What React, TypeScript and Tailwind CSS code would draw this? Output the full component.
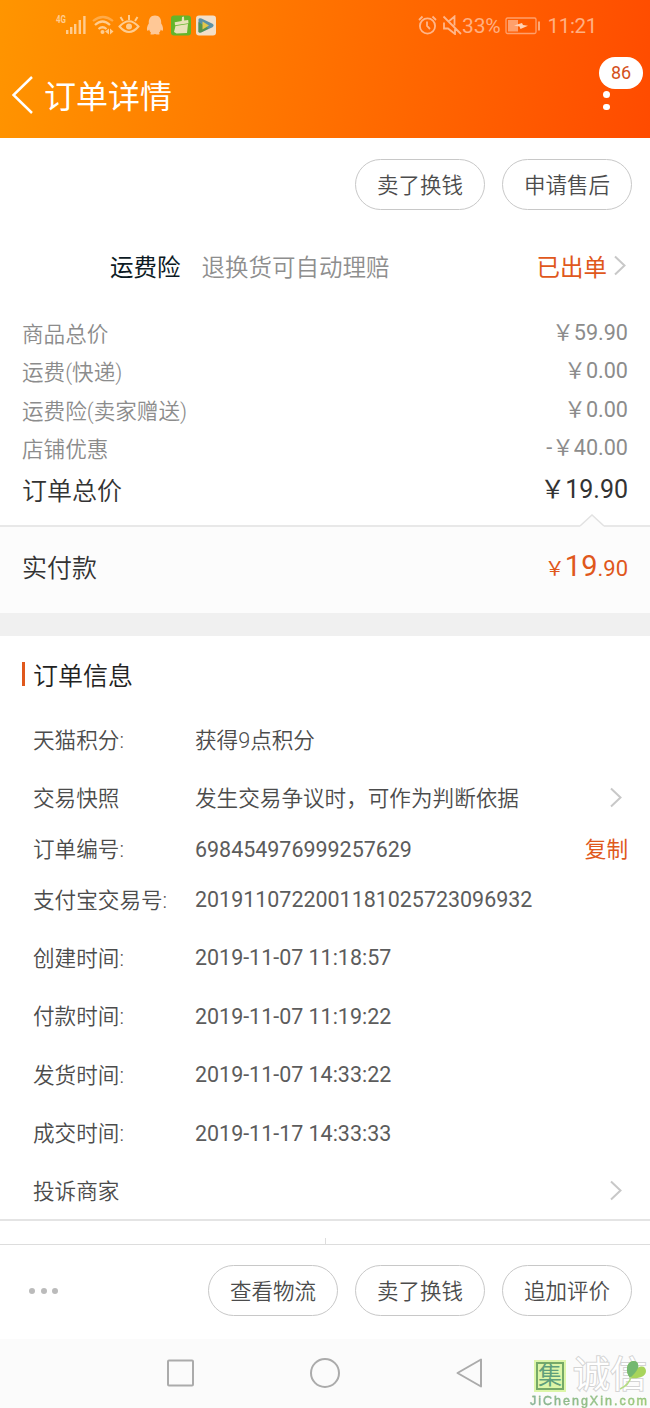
import type { ReactNode } from 'react';
import clsx from 'clsx';

const prices = [
  { label: '商品总价', value: '￥59.90' },
  { label: '运费(快递)', value: '￥0.00' },
  { label: '运费险(卖家赠送)', value: '￥0.00' },
  { label: '店铺优惠', value: '-￥40.00' },
];

interface InfoItem {
  label: string;
  value?: string;
  height: string;
  numeric?: boolean;
  action?: 'arrow' | 'copy';
}

const infoItems: InfoItem[] = [
  { label: '天猫积分:', value: '获得9点积分', height: 'h-[58px]' },
  { label: '交易快照', value: '发生交易争议时，可作为判断依据', height: 'h-[58px]', action: 'arrow' },
  { label: '订单编号:', value: '698454976999257629', height: 'h-11', numeric: true, action: 'copy' },
  { label: '支付宝交易号:', value: '2019110722001181025723096932', height: 'h-[57px]', numeric: true },
  { label: '创建时间:', value: '2019-11-07 11:18:57', height: 'h-[59px]', numeric: true },
  { label: '付款时间:', value: '2019-11-07 11:19:22', height: 'h-[58px]', numeric: true },
  { label: '发货时间:', value: '2019-11-07 14:33:22', height: 'h-[59px]', numeric: true },
  { label: '成交时间:', value: '2019-11-17 14:33:33', height: 'h-[58px]', numeric: true },
  { label: '投诉商家', height: 'h-[57px]', action: 'arrow' },
];

const Arrow = () => (
  <svg className="h-[22px] w-3" viewBox="0 0 12 22" fill="none" stroke="#c8c8c8" strokeWidth="2">
    <path d="M1 1.500l9.500 9L1 19.500" />
  </svg>
);

const PillButton = ({ children }: { children: ReactNode }) => (
  <button className="h-[51px] w-[130px] rounded-full border border-[#c8c8c8] bg-white pt-[3px] text-[21.500px] font-[350] text-[#4c4c4c]">
    {children}
  </button>
);

const StatusBar = () => (
  <div className="flex h-[51px] items-center pr-[53px] pl-[55px] text-[#ffc48a]">
    <svg className="mb-[3px] h-6 w-[162px]" viewBox="0 0 162 24" fill="none">
      <text x="1" y="11" fontSize="10" fontWeight="700" fill="#ffcc8f" textLength="10" lengthAdjust="spacingAndGlyphs">4G</text>
      <path d="M11 18h2.400v4H11zM15 15h2.400v7H15zM19 12h2.400v10H19zM23.600 8h2.400v14h-2.400zM28.200 4h2.400v18h-2.400z" fill="#ffcc8f" />
      {/* wifi */}
      <g stroke="#ffcc8f" strokeWidth="2.200">
        <path d="M38 9q10-8 20 0" opacity=".5" />
        <path d="M40 13q7.500-7 15 0M43.500 17q4-3.500 8 0" />
      </g>
      <circle cx="47.500" cy="20" r="2" fill="#ffcc8f" />
      <path d="M50 19.500l4-3v6zM58.500 19.500l-3.500-3v6z" fill="#ffcc8f" />
      {/* eye */}
      <g stroke="#ffcc8f" strokeWidth="2">
        <path d="M64.500 14.500Q74 4 83.500 14.500 74 25.500 64.500 14.500z" />
        <path d="M74 8V3M68 9l-2.500-4M80 9l2.500-4" />
      </g>
      <circle cx="74" cy="14.500" r="3" fill="#ffcc8f" />
      {/* penguin */}
      <path d="M100 3.500c-4.500 0-6.500 3.500-6.200 8-1.600 2.500-2.300 5-1.600 7 .6.700 1.300 0 1.900-1 .4 1.600 1.200 2.500 2 3.200-2 2.100.5 2.300 3.900 1.300 3.400 1 5.900.8 3.900-1.300.8-.7 1.600-1.600 2-3.200.6 1 1.300 1.700 1.900 1 .7-2 0-4.500-1.600-7 .3-4.500-1.700-8-6.200-8z" fill="#ffc896" />
      {/* cleaner app */}
      <rect x="116" y="3.500" width="20" height="20" rx="3" fill="#63b52b" />
      <path d="M127 5l2-.500.200 4 4-.500.300 3.200-13.500 2-.300-3 7-1.200zM120.500 14l12.500-2L132 21l-10.500.500-2.500-1.500z" fill="#e9e2b8" />
      {/* video app */}
      <rect x="141" y="3.500" width="20" height="20" rx="3" fill="#f3dfc8" />
      <path d="M143.500 7q1-1.200 3-.4l11 5.200q2.200 1.700 0 3.400l-11 5.100q-2 .8-3-.4z" fill="#5d91a5" />
      <path d="M143.500 10v9.900q1 1.200 3 .4l7-3.800z" fill="#57944d" />
      <path d="M147.500 9.500l6.500 4-6.500 4z" fill="#e3c84b" />
    </svg>
    <div className="ml-auto flex items-center">
      <svg className="mb-0.5 h-5 w-[44px]" viewBox="0 0 44 20" fill="none" stroke="#ffb68a" strokeWidth="1.800">
        <circle cx="9.500" cy="11" r="7.600" />
        <path d="M9 6.500V11l3 3M1 5l3.500-3.500M18 5l-3.500-3.500M26 7.500v6h4l7 5.500V14M30 7l6.500-5.500v9M25.500 1.500L43 19" />
      </svg>
      <span className="text-[21px] leading-6 tracking-[-0.200px] text-[#ffb083]">33%</span>
      <svg className="ml-[5px] h-[18px] w-[36px]" viewBox="0 0 36 18" fill="none">
        <rect x="1" y="1" width="30" height="15.500" rx="1.500" stroke="#ffa06b" strokeWidth="1.300" />
        <path d="M3 3h10v11.500H3z" fill="#ffa06b" />
        <path d="M9 8.500L17 6l1 2 5 .8L15.500 12l-1-2.500z" fill="#ffd2b5" />
        <path d="M33 4.500h2v9h-2z" fill="#ffa875" />
      </svg>
      <span className="ml-[6px] text-[20.500px] leading-6 tracking-[-0.300px] text-[#ffb083]">11:21</span>
    </div>
  </div>
);

const Header = () => (
  <header className="relative h-[138px] bg-[linear-gradient(100deg,#ff9500_0%,#ff7200_48%,#ff4b00_100%)]">
    <StatusBar />
    <div className="flex h-[87px] items-center pl-3 text-white">
      <svg className="h-[38px] w-[21px]" viewBox="0 0 21 38" fill="none" stroke="currentColor" strokeWidth="2.500">
        <path d="M20 1L1.500 19 20 37" />
      </svg>
      <h1 className="ml-[11px] pt-1 text-[32px] leading-none">订单详情</h1>
    </div>
    <div className="absolute top-[91px] left-[603px] flex flex-col gap-[6px]">
      <i className="size-[6.500px] rounded-full bg-white" />
      <i className="size-[6.500px] rounded-full bg-white" />
    </div>
    <span className="absolute top-[57px] left-[599px] flex h-8 w-[44px] items-center justify-center rounded-full bg-white text-[18px] text-[#d4511b]">
      86
    </span>
  </header>
);

const App = () => {
  return (
    <div className="flex h-[1408px] w-[650px] flex-col overflow-hidden bg-white font-['Roboto','Noto_Sans_CJK_SC',sans-serif] text-[21.600px] leading-none">
      <Header />

      <div className="flex h-[92px] items-center justify-end gap-[17px] pr-[18px]">
        <PillButton>卖了换钱</PillButton>
        <PillButton>申请售后</PillButton>
      </div>

      <div className="flex h-[71px] items-center pr-6 pl-[110px] text-[23.500px]">
        <span className="pt-[7px] text-[#0c1a24]">运费险</span>
        <span className="ml-[21px] pt-[7px] font-[350] text-[#8e8e8e]">退换货可自动理赔</span>
        <span className="mr-[7px] ml-auto pt-[7px] text-[#e0581c]">已出单</span>
        <Arrow />
      </div>

      {/* Price breakdown */}
      <div className="h-[224px] px-[22px] pt-[13px]">
        {prices.map((item) => (
          <div key={item.label} className="flex h-[38.500px] items-center justify-between text-[#8c8c8c]">
            <span className="pt-[3px] font-[350]">{item.label}</span>
            <span className="pb-px">{item.value}</span>
          </div>
        ))}
        <div className="flex h-11 items-center justify-between text-[25px] text-[#333]">
          <span className="pt-0.5 font-[350]">订单总价</span>
          <span className="pb-[2px]">￥19.90</span>
        </div>
      </div>

      {/* Amount paid */}
      <div className="relative flex h-[88px] items-center justify-between border-t-2 border-[#e8e8e8] bg-[#fcfcfc] px-[22px] pb-[4px] text-[25px] text-[#333]">
        <svg className="absolute -top-[13px] left-[580px] h-[14px] w-6" viewBox="0 0 24 14" fill="#fcfcfc">
          <path d="M0 12L12 1l12 11v2H0z" />
          <path d="M0 12L12 1l12 11" fill="none" stroke="#e2e2e2" strokeWidth="1.500" />
        </svg>
        <span className="font-[350]">实付款</span>
        <span className="pb-1 text-[22px] text-[#e0581c]">
          <span className="text-[20px]">￥</span>
          <span className="text-[29px]">19</span>.90
        </span>
      </div>
      <div className="h-[23px] bg-[#f0f0f0]" />

      {/* Order info */}
      <div className="flex h-[75px] items-center pl-[22px]">
        <i className="h-6 w-[3px] bg-[#e0581c]" />
        <h2 className="ml-2 pt-[5px] text-[25px] font-[350] text-[#222]">订单信息</h2>
      </div>
      {infoItems.map((item) => (
        <div key={item.label} className={clsx('flex shrink-0 items-center pr-[22px] pl-[33px]', item.height)}>
          <span className="w-[162px] pt-0.5 font-[350] whitespace-nowrap text-[#4c4c4c]">{item.label}</span>
          <span
            className={clsx(
              'whitespace-nowrap',
              item.numeric ? 'pt-px text-[21.450px] text-[#5c5c5c]' : 'pt-0.5 font-[350] text-[#4c4c4c]'
            )}
          >
            {item.value}
          </span>
          {item.action === 'arrow' && (
            <span className="mr-1.5 ml-auto">
              <Arrow />
            </span>
          )}
          {item.action === 'copy' && <button className="ml-auto pt-0.5 text-[#e0581c]">复制</button>}
        </div>
      ))}

      <div className="flex h-[25px] shrink-0 items-end justify-center border-t-2 border-[#e4e4e4]">
        <i className="h-1.5 w-px bg-[#ddd]" />
      </div>

      <div className="flex h-[95px] shrink-0 items-center border-t border-[#ddd] pr-[18px] pb-[3px] pl-[29px]">
        <div className="flex gap-[5.500px]">
          <i className="size-1.5 rounded-full bg-[#bbb]" />
          <i className="size-1.5 rounded-full bg-[#bbb]" />
          <i className="size-1.5 rounded-full bg-[#bbb]" />
        </div>
        <div className="ml-auto flex gap-[17px]">
          <PillButton>查看物流</PillButton>
          <PillButton>卖了换钱</PillButton>
          <PillButton>追加评价</PillButton>
        </div>
      </div>

      {/* System navigation */}
      <nav className="relative flex h-[69px] shrink-0 items-center justify-center bg-[#fbfbfb]">
        <svg className="h-8 w-[316px]" viewBox="0 0 316 32" fill="none" stroke="#ababab" strokeWidth="2">
          <rect x="1" y="2.500" width="25" height="25" rx="1" />
          <circle cx="158" cy="15" r="14" />
          <path d="M314 1.500v27L290.500 15z" strokeLinejoin="round" />
        </svg>
        <div className="absolute top-[20px] left-[530px] w-[120px]">
          <div className="flex h-[33px] items-center">
            <span className="ml-1 flex size-8 items-center justify-center bg-[#dcf5a8]">
              <span className="flex size-7 items-center justify-center border-2 border-[#76a968] pt-px text-[24px] text-[#5f9e7b]">
                集
              </span>
            </span>
            <span className="ml-[7px] text-[37px] leading-8 font-[350] whitespace-nowrap text-white [-webkit-text-stroke:2px_#d4d4d4] [paint-order:stroke_fill]">
              诚信
            </span>
          </div>
          <svg className="absolute top-0 left-[88px] h-8 w-8" viewBox="0 0 32 32">
            <path d="M12 19C7 13 8 3 15 2c4-.5 6 3 5 7 4-3 8-1 8 3 0 6-8 8-16 7z" fill="#a8d45b" />
            <path d="M12 19C7 13 8 3 15 2c4-.5 6 3 5 7-1 3-4 6-8 10z" fill="#74b870" />
            <path d="M13 18Q11 26 2 30" fill="none" stroke="#b4dc82" strokeWidth="1.500" />
          </svg>
          <div className="mt-[3px] bg-linear-to-r from-[#86ad9d] to-[#a6d46c] bg-clip-text font-['Liberation_Sans',sans-serif] text-[12.500px] leading-[13px] tracking-[2px] whitespace-nowrap text-transparent [-webkit-text-stroke:0.300px_#8fbd86]">
            JiChengXin.com
          </div>
        </div>
      </nav>
    </div>
  );
};

export default App;
